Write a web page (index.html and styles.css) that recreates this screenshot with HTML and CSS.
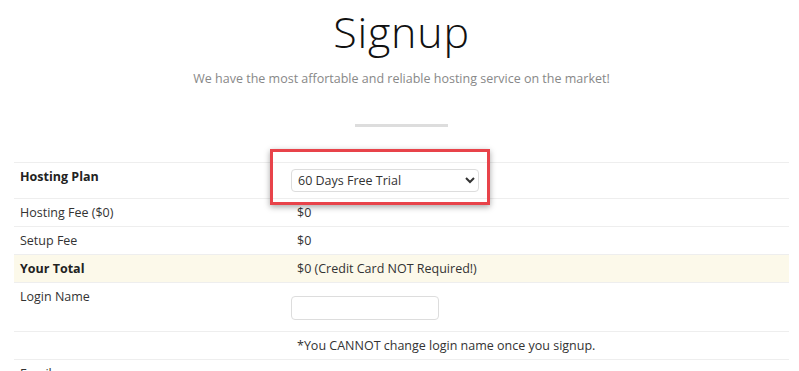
FILE: index.html
```html
<!DOCTYPE html>
<html lang="en">
<head>
    <meta charset="UTF-8">
    <meta name="viewport" content="width=device-width, initial-scale=1.0">
    <title>Signup</title>
    <link rel="stylesheet" href="styles.css">
</head>
<body>

<div class="container">
    <div class="heading">
        <h1>Signup</h1>
        <p class="lead">We have the most affortable and reliable hosting service on the market!</p>
        <div class="divider"></div>
    </div>

    <table class="signup-table">
        <tr>
            <th>Hosting Plan</th>
            <td class="field">
                <span class="highlight-wrap">
                    <select id="plan" name="plan">
                        <option>60 Days Free Trial</option>
                        <option>Basic Plan</option>
                        <option>Business Plan</option>
                    </select>
                    <span class="highlight"></span>
                </span>
            </td>
        </tr>
        <tr>
            <td>Hosting Fee ($0)</td>
            <td>$0</td>
        </tr>
        <tr>
            <td>Setup Fee</td>
            <td>$0</td>
        </tr>
        <tr class="total">
            <th>Your Total</th>
            <td>$0 (Credit Card NOT Required!)</td>
        </tr>
        <tr>
            <td>Login Name</td>
            <td class="field"><input type="text" id="login" name="login"></td>
        </tr>
        <tr>
            <td></td>
            <td>*You CANNOT change login name once you signup.</td>
        </tr>
        <tr>
            <td>Email</td>
            <td class="field"><input type="email" id="email" name="email"></td>
        </tr>
    </table>
</div>

</body>
</html>
```

FILE: styles.css
```css
body {
    font-family: "Open Sans", Arial, sans-serif;
    margin: 0;
    padding: 0;
    background-color: #fff;
    color: #333;
}
.container {
    margin: 0 10px 0 14px;
}
.heading {
    text-align: center;
    padding-top: 6px;
    height: 156px;
}
h1 {
    font-size: 43px;
    font-weight: 300;
    color: #111;
    margin: 0;
    line-height: 52px;
    letter-spacing: 0.8px;
}
.lead {
    font-size: 12.5px;
    color: #888;
    margin: 12px 0 0;
}
.divider {
    width: 93px;
    height: 3px;
    background-color: #ddd;
    margin: 37px auto 0;
}
.signup-table {
    width: 100%;
    border-collapse: collapse;
    font-size: 12.5px;
}
.signup-table th,
.signup-table td {
    text-align: left;
    vertical-align: top;
    padding: 6px 6px 5px;
    line-height: 16px;
    border-top: 1px solid #eee;
}
.signup-table th {
    font-weight: 700;
    color: #222;
}
.signup-table tr > :first-child {
    width: 265px;
}
.signup-table td.field {
    padding-left: 0;
}
.signup-table tr:first-child > * {
    padding-bottom: 6px;
}
.total th,
.total td {
    background-color: #fcf9ea;
}
select {
    display: block;
    width: 188px;
    height: 23px;
    font-family: inherit;
    font-size: 12.5px;
    color: #333;
    border: 1px solid #ddd;
    border-radius: 4px;
    background-color: #fff;
    padding: 0 2px;
}
input {
    width: 148px;
    height: 24px;
    box-sizing: border-box;
    border: 1px solid #ddd;
    border-radius: 4px;
    margin: 7px 0 6px;
    display: block;
}
.highlight-wrap {
    position: relative;
    display: inline-block;
    vertical-align: top;
}
.highlight {
    position: absolute;
    left: -21px;
    right: -11px;
    top: -20px;
    bottom: -13px;
    border: 3px solid #e8434a;
    box-shadow: 0 2px 6px rgba(0, 0, 0, 0.35);
    pointer-events: none;
}
```
